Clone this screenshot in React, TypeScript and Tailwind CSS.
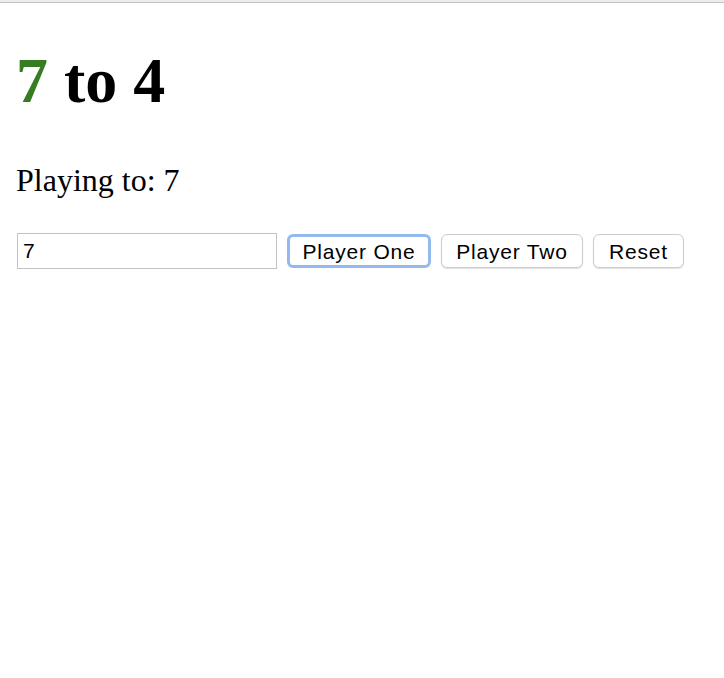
export default function App() {
  return (
    <div className="min-h-screen bg-white">
      {/* browser chrome edge */}
      <div className="h-[3px] bg-[#ececec] border-b border-[#c4c4c4]" />

      <div className="px-4">
        <h1 className="mt-[41px] text-[64px] leading-[74px] font-bold font-['Liberation_Serif',serif] text-black">
          <span className="text-[#367d22]">7</span> to 4
        </h1>

        <p className="mt-[44px] text-[32px] leading-[37px] font-['Liberation_Serif',serif] text-black">
          Playing to: 7
        </p>

        <div className="mt-[34px] flex items-center gap-[10px] font-['Liberation_Sans',sans-serif]">
          <input
            defaultValue="7"
            className="ml-px w-[260px] h-[36px] border border-[#c2c2c2] px-[5px] text-[21px] text-black outline-none"
          />
          <button className="w-[144px] h-[34px] rounded-[6px] border-[3px] border-[#93b9ee] bg-white text-[21px] leading-none tracking-[0.8px] text-black">
            Player One
          </button>
          <button className="w-[142px] h-[34px] rounded-[6px] border border-[#cdcdcd] bg-white text-[21px] leading-none tracking-[0.8px] text-black shadow-[0_1px_1px_rgba(0,0,0,0.12)]">
            Player Two
          </button>
          <button className="w-[91px] h-[34px] rounded-[6px] border border-[#cdcdcd] bg-white text-[21px] leading-none tracking-[0.8px] text-black shadow-[0_1px_1px_rgba(0,0,0,0.12)]">
            Reset
          </button>
        </div>
      </div>
    </div>
  );
}
